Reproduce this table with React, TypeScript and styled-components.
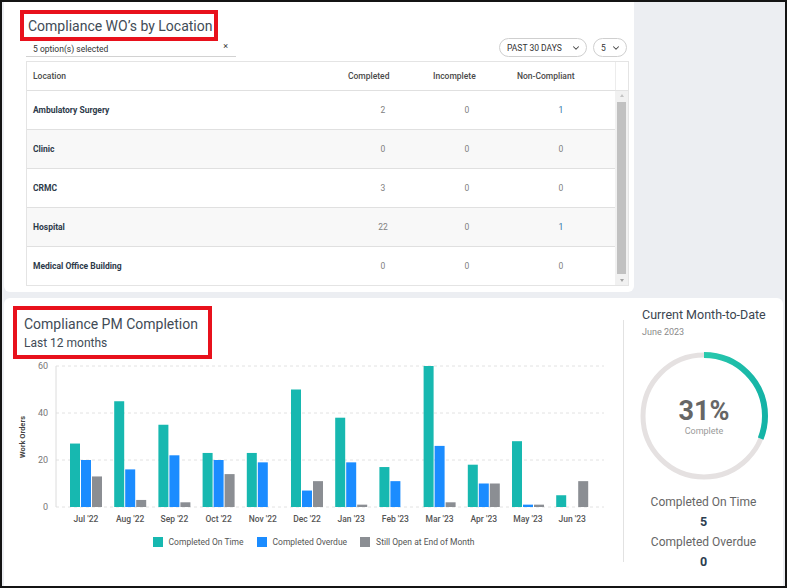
import styled, { createGlobalStyle } from "styled-components";
import { ChevronDown } from "lucide-react";

const GlobalStyle = createGlobalStyle`
  html, body {
    margin: 0;
    padding: 0;
  }
  body {
    font-family: Roboto, "Liberation Sans", Arial, sans-serif;
    -webkit-font-smoothing: antialiased;
  }
`;

const Frame = styled.div`
  width: 787px;
  height: 588px;
  box-sizing: border-box;
  border: 2px solid #141414;
  background: #eceef2;
  padding: 0 1px 0 2px;
  display: flex;
  flex-direction: column;
  gap: 6px;
  overflow: hidden;
`;

const TopRow = styled.div`
  height: 290px;
  display: flex;
`;

const LocationCard = styled.section`
  width: 630px;
  box-sizing: border-box;
  background: #fff;
  border-radius: 0 0 6px 6px;
  padding: 8px 5px 0 16px;
  display: flex;
  flex-direction: column;
`;

const TitleBox = styled.div<{ $w: number; $h: number }>`
  width: ${(p) => p.$w}px;
  height: ${(p) => p.$h}px;
  box-sizing: border-box;
  border: 4px solid #e8111c;
  padding: 1px 0 0 4px;
  display: flex;
  flex-direction: column;
  justify-content: center;
  color: #414b56;
`;

const Title = styled.div`
  font-size: 14px;
  line-height: 17px;
  white-space: nowrap;
`;

const Subtitle = styled.div`
  font-size: 12px;
  line-height: 16px;
  margin-top: 2px;
`;

const Content = styled.div`
  margin-left: 6px;
  display: flex;
  flex-direction: column;
`;

const FilterRow = styled.div`
  margin-top: -3px;
  height: 19px;
  display: flex;
  justify-content: space-between;
  align-items: flex-end;
`;

const MultiSelect = styled.div`
  width: 210px;
  height: 16px;
  box-sizing: border-box;
  border-bottom: 1px solid #d2d2d2;
  padding: 1px 8px 0 7px;
  display: flex;
  justify-content: space-between;
  align-items: center;
  font-size: 8.5px;
  color: #333;
`;

const Clear = styled.span`
  font-size: 9px;
  margin-top: -6px;
`;

const Pills = styled.div`
  display: flex;
  gap: 6px;
  margin-right: 2px;
`;

const Pill = styled.div<{ $w: number }>`
  width: ${(p) => p.$w}px;
  height: 19px;
  box-sizing: border-box;
  border: 1px solid #cfcfcf;
  border-radius: 10px;
  padding: 0 5px 0 7px;
  display: flex;
  align-items: center;
  justify-content: space-between;
  font-size: 8.5px;
  color: #333;
`;

const Table = styled.div`
  margin-top: 4px;
  width: 603px;
  box-sizing: border-box;
  border: 1px solid #e4e4e4;
`;

const cols = "312px 88px 80px 108px";

const HeaderRow = styled.div`
  height: 28px;
  display: grid;
  grid-template-columns: ${cols} 13px;
  align-items: center;
  font-size: 8.5px;
  font-weight: 500;
  color: #4a4a4a;
`;

const HeaderCell = styled.div<{ $pad: number }>`
  padding-left: ${(p) => p.$pad}px;
`;

const HeaderGap = styled.div`
  height: 100%;
  border-left: 1px solid #ececec;
`;

const Body = styled.div`
  display: flex;
`;

const Rows = styled.div`
  flex: 1;
`;

const Row = styled.div<{ $alt: boolean }>`
  height: 39px;
  box-sizing: border-box;
  border-top: 1px solid #e0e0e0;
  background: ${(p) => (p.$alt ? "#f8f8f8" : "#fff")};
  display: grid;
  grid-template-columns: ${cols};
  align-items: center;
  font-size: 8.5px;
`;

const NameCell = styled.div`
  padding-left: 6px;
  font-weight: 700;
  color: #2d3a4a;
`;

const NumCell = styled.div<{ $link?: boolean }>`
  text-align: center;
  color: ${(p) => (p.$link ? "#2f76a6" : "#808080")};
`;

const ScrollTrack = styled.div`
  width: 13px;
  background: #f1f1f1;
  border-top: 1px solid #e3e3e3;
  display: flex;
  flex-direction: column;
  align-items: center;
  padding: 3px 0 3px;
  box-sizing: border-box;
`;

const Arrow = styled.div<{ $down?: boolean }>`
  width: 0;
  height: 0;
  border-left: 2.5px solid transparent;
  border-right: 2.5px solid transparent;
  ${(p) =>
    p.$down
      ? "border-top: 3px solid #a3a3a3;"
      : "border-bottom: 3px solid #c4c4c4;"}
`;

const Thumb = styled.div`
  width: 9px;
  flex: 1;
  margin: 5px 0;
  background: #c1c1c1;
`;

const SideSpace = styled.div`
  flex: 1;
`;

const PmCard = styled.section`
  flex: 1;
  margin-right: 1px;
  background: #fff;
  border-radius: 6px 6px 0 0;
  display: flex;
`;

const ChartSection = styled.div`
  flex: 1;
  padding: 8px 0 0 8px;
  display: flex;
  flex-direction: column;
`;

const PmTitleBox = styled(TitleBox)`
  margin-left: 1px;
  padding-left: 7px;
  padding-top: 2px;
`;

const Legend = styled.div`
  margin-top: 8px;
  display: flex;
  justify-content: center;
  gap: 13px;
  padding-right: 8px;
  font-size: 8.5px;
  color: #555;
`;

const LegendItem = styled.div`
  display: flex;
  align-items: center;
  gap: 6px;
`;

const Swatch = styled.span<{ $c: string }>`
  width: 10px;
  height: 10px;
  background: ${(p) => p.$c};
`;

const Divider = styled.div`
  width: 1px;
  background: #e2e2e2;
  margin: 22px 0 24px;
`;

const MtdSection = styled.div`
  width: 159px;
  padding-top: 10px;
  display: flex;
  flex-direction: column;
`;

const MtdTitle = styled.div`
  padding-left: 18px;
  font-size: 12.5px;
  line-height: 14px;
  color: #3b4550;
  white-space: nowrap;
`;

const MtdSub = styled.div`
  padding-left: 18px;
  margin-top: 5px;
  font-size: 9px;
  line-height: 11px;
  color: #8a8a8a;
`;

const Donut = styled.svg`
  display: block;
  margin: 13px auto 0;
`;

const Stats = styled.div`
  margin-top: 11px;
  display: flex;
  flex-direction: column;
  align-items: center;
  font-size: 12px;
  line-height: 20px;
  color: #666;
`;

const StatValue = styled.div`
  font-weight: 700;
  color: #2c3e50;
  font-size: 12.5px;
`;

const TEAL = "#17b8b0";
const BLUE = "#1b8cff";
const GREY = "#8b8e93";

const locations = [
  { name: "Ambulatory Surgery", completed: 2, incomplete: 0, non: 1 },
  { name: "Clinic", completed: 0, incomplete: 0, non: 0 },
  { name: "CRMC", completed: 3, incomplete: 0, non: 0 },
  { name: "Hospital", completed: 22, incomplete: 0, non: 1 },
  { name: "Medical Office Building", completed: 0, incomplete: 0, non: 0 },
];

const months = [
  { label: "Jul '22", onTime: 27, overdue: 20, open: 13 },
  { label: "Aug '22", onTime: 45, overdue: 16, open: 3 },
  { label: "Sep '22", onTime: 35, overdue: 22, open: 2 },
  { label: "Oct '22", onTime: 23, overdue: 20, open: 14 },
  { label: "Nov '22", onTime: 23, overdue: 19, open: 0 },
  { label: "Dec '22", onTime: 50, overdue: 7, open: 11 },
  { label: "Jan '23", onTime: 38, overdue: 19, open: 1 },
  { label: "Feb '23", onTime: 17, overdue: 11, open: 0 },
  { label: "Mar '23", onTime: 60, overdue: 26, open: 2 },
  { label: "Apr '23", onTime: 18, overdue: 10, open: 10 },
  { label: "May '23", onTime: 28, overdue: 1, open: 1 },
  { label: "Jun '23", onTime: 5, overdue: 0, open: 11 },
];

const BASE = 148;
const SCALE = 2.35;
const AXIS_X = 44;

const BarChart = () => (
  <svg width={604} height={170}>
    {[0, 20, 40, 60].map((v) => {
      const y = BASE - v * SCALE;
      return (
        <g key={v}>
          <line x1={AXIS_X} x2={592} y1={y} y2={y} stroke="#e2e2e2" strokeDasharray="3 3" />
          <text x={36} y={y + 3} fontSize={9} fill="#777" textAnchor="end">
            {v}
          </text>
        </g>
      );
    })}
    <line x1={AXIS_X} x2={AXIS_X} y1={7} y2={BASE} stroke="#dcdcdc" />
    <text
      x={13}
      y={78}
      fontSize={7.5}
      fontWeight={700}
      fill="#444"
      textAnchor="middle"
      transform="rotate(-90 13 78)"
    >
      Work Orders
    </text>
    {months.map((m, i) => {
      const cx = 74 + i * 44.2;
      const bars = [
        { v: m.onTime, c: TEAL, dx: -16 },
        { v: m.overdue, c: BLUE, dx: -5 },
        { v: m.open, c: GREY, dx: 6 },
      ];
      return (
        <g key={m.label}>
          {bars.map((b) =>
            b.v > 0 ? (
              <rect
                key={b.c}
                x={cx + b.dx}
                y={BASE - b.v * SCALE}
                width={10}
                height={b.v * SCALE}
                fill={b.c}
              />
            ) : null
          )}
          <text x={cx} y={163} fontSize={8.5} fontWeight={500} fill="#555" textAnchor="middle">
            {m.label}
          </text>
        </g>
      );
    })}
  </svg>
);

const R = 61;
const CIRC = 2 * Math.PI * R;

const ProgressRing = ({ pct }: { pct: number }) => (
  <Donut width={130} height={130}>
    <defs>
      <linearGradient id="ring" x1="0" y1="0" x2="0" y2="1">
        <stop offset="0" stopColor="#3fe0b4" />
        <stop offset="1" stopColor="#14b3a6" />
      </linearGradient>
    </defs>
    <circle cx={65} cy={65} r={R} fill="none" stroke="#e5e1e1" strokeWidth={5} />
    <circle
      cx={65}
      cy={65}
      r={R}
      fill="none"
      stroke="url(#ring)"
      strokeWidth={6}
      strokeDasharray={`${(CIRC * pct) / 100} ${CIRC}`}
      transform="rotate(-90 65 65)"
    />
    <text x={65} y={69} fontSize={27} fontWeight={700} fill="#666" textAnchor="middle">
      {pct}%
    </text>
    <text x={65} y={83} fontSize={9} fill="#9a9a9a" textAnchor="middle">
      Complete
    </text>
  </Donut>
);

export default function App() {
  return (
    <>
      <GlobalStyle />
      <Frame>
        <TopRow>
          <LocationCard>
            <TitleBox $w={198} $h={31}>
              <Title>Compliance WO’s by Location</Title>
            </TitleBox>
            <Content>
              <FilterRow>
                <MultiSelect>
                  <span>5 option(s) selected</span>
                  <Clear>×</Clear>
                </MultiSelect>
                <Pills>
                  <Pill $w={88}>
                    PAST 30 DAYS
                    <ChevronDown size={10} strokeWidth={2.5} color="#444" />
                  </Pill>
                  <Pill $w={34}>
                    5
                    <ChevronDown size={10} strokeWidth={2.5} color="#444" />
                  </Pill>
                </Pills>
              </FilterRow>
              <Table>
                <HeaderRow>
                  <HeaderCell $pad={6}>Location</HeaderCell>
                  <HeaderCell $pad={9}>Completed</HeaderCell>
                  <HeaderCell $pad={6}>Incomplete</HeaderCell>
                  <HeaderCell $pad={10}>Non-Compliant</HeaderCell>
                  <HeaderGap />
                </HeaderRow>
                <Body>
                  <Rows>
                    {locations.map((l, i) => (
                      <Row key={l.name} $alt={i % 2 === 1}>
                        <NameCell>{l.name}</NameCell>
                        <NumCell>{l.completed}</NumCell>
                        <NumCell>{l.incomplete}</NumCell>
                        <NumCell $link={l.non > 0}>{l.non}</NumCell>
                      </Row>
                    ))}
                  </Rows>
                  <ScrollTrack>
                    <Arrow />
                    <Thumb />
                    <Arrow $down />
                  </ScrollTrack>
                </Body>
              </Table>
            </Content>
          </LocationCard>
          <SideSpace />
        </TopRow>
        <PmCard>
          <ChartSection>
            <PmTitleBox $w={199} $h={53}>
              <Title>Compliance PM Completion</Title>
              <Subtitle>Last 12 months</Subtitle>
            </PmTitleBox>
            <BarChart />
            <Legend>
              <LegendItem>
                <Swatch $c={TEAL} />
                Completed On Time
              </LegendItem>
              <LegendItem>
                <Swatch $c={BLUE} />
                Completed Overdue
              </LegendItem>
              <LegendItem>
                <Swatch $c={GREY} />
                Still Open at End of Month
              </LegendItem>
            </Legend>
          </ChartSection>
          <Divider />
          <MtdSection>
            <MtdTitle>Current Month-to-Date</MtdTitle>
            <MtdSub>June 2023</MtdSub>
            <ProgressRing pct={31} />
            <Stats>
              <div>Completed On Time</div>
              <StatValue>5</StatValue>
              <div>Completed Overdue</div>
              <StatValue>0</StatValue>
            </Stats>
          </MtdSection>
        </PmCard>
      </Frame>
    </>
  );
}
